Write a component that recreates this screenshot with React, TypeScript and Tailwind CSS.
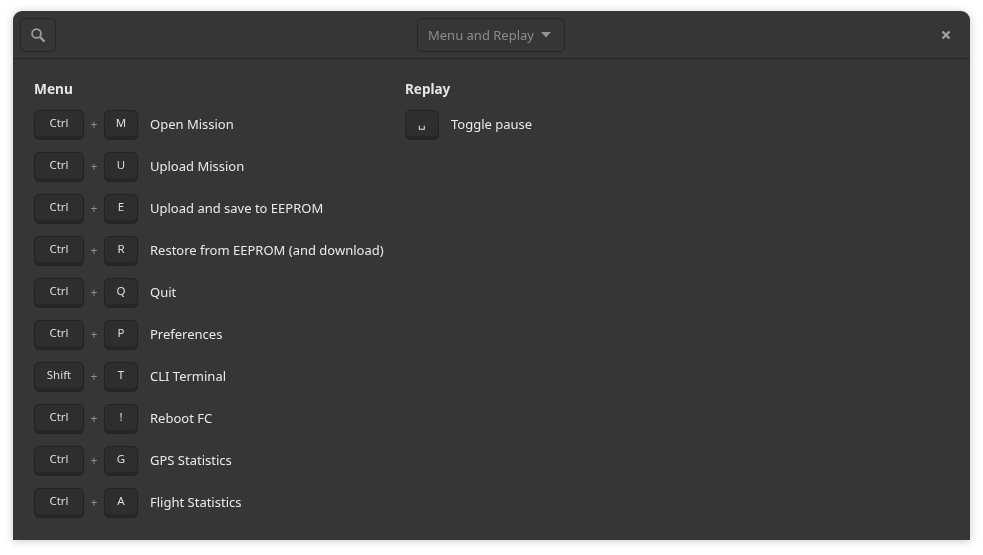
import React from "react";

const menu: [string, string, string][] = [
  ["Ctrl", "M", "Open Mission"],
  ["Ctrl", "U", "Upload Mission"],
  ["Ctrl", "E", "Upload and save to EEPROM"],
  ["Ctrl", "R", "Restore from EEPROM (and download)"],
  ["Ctrl", "Q", "Quit"],
  ["Ctrl", "P", "Preferences"],
  ["Shift", "T", "CLI Terminal"],
  ["Ctrl", "!", "Reboot FC"],
  ["Ctrl", "G", "GPS Statistics"],
  ["Ctrl", "A", "Flight Statistics"],
];

function Key({ label, wide }: { label: string; wide?: boolean }) {
  return (
    <div
      className={`flex h-[30px] items-start justify-center rounded-[5px] border border-[#232323] bg-[#2e2e2e] pt-[3px] text-[11.5px] leading-[18px] text-[#dedede] shadow-[inset_0_-3px_0_#272727] ${wide ? "w-[50px]" : "w-[34px]"}`}
    >
      {label}
    </div>
  );
}

export default function App() {
  return (
    <div className="h-[555px] w-[983px] overflow-hidden bg-white pl-[13px] pt-[11px] font-['Noto_Sans',sans-serif] antialiased">
      <div className="flex h-[529px] w-[957px] flex-col rounded-t-[9px] bg-[#363636] shadow-[0_1px_9px_rgba(0,0,0,0.22)] will-change-transform">
        <header className="grid h-[48px] shrink-0 grid-cols-[397px_148px_1fr] items-center border-b border-[#272727] pl-[7px] pr-[19px] pt-[1px]">
          <div className="flex h-[34px] w-[36px] items-center justify-center rounded-[5px] border border-[#272727]">
            <svg width="16" height="16" viewBox="0 0 16 16" fill="none" stroke="#9c9c9c">
              <circle cx="6.5" cy="6.5" r="4.4" strokeWidth="1.8" />
              <path d="M10 10l4.6 4.6" strokeWidth="2.4" />
            </svg>
          </div>
          <div className="flex h-[34px] w-[148px] items-center gap-[6px] rounded-[5px] border border-[#272727] pl-[10px] text-[13px] text-[#8b8b8b]">
            <span className="pt-[1px]">Menu and Replay</span>
            <svg width="12" height="6" viewBox="0 0 12 6" fill="#929292">
              <path d="M1 0h10L6 5.5z" />
            </svg>
          </div>
          <svg className="justify-self-end" width="10" height="10" viewBox="0 0 10 10" stroke="#a3a3a3" strokeWidth="2.2">
            <path d="M1.5 1.5l7 7M8.5 1.5l-7 7" />
          </svg>
        </header>
        <main className="flex gap-[21px] pl-[21px] pt-[20px] text-[13px] text-[#eaeaea]">
          <section className="w-[350px]">
            <h2 className="mb-[11px] text-[13.7px] font-bold leading-[20px] text-[#e6e6e6]">Menu</h2>
            <div className="flex flex-col gap-[12px]">
              {menu.map(([mod, key, text]) => (
                <div key={text} className="flex h-[30px] items-center">
                  <Key label={mod} wide />
                  <span className="w-[20px] text-center text-[12px] text-[#8f8f8f]">+</span>
                  <Key label={key} />
                  <span className="ml-[12px] whitespace-nowrap">{text}</span>
                </div>
              ))}
            </div>
          </section>
          <section>
            <h2 className="mb-[11px] text-[13.5px] font-bold leading-[20px] text-[#e6e6e6]">Replay</h2>
            <div className="flex h-[30px] items-center">
              <Key label="␣" />
              <span className="ml-[12px] whitespace-nowrap">Toggle pause</span>
            </div>
          </section>
        </main>
      </div>
    </div>
  );
}
